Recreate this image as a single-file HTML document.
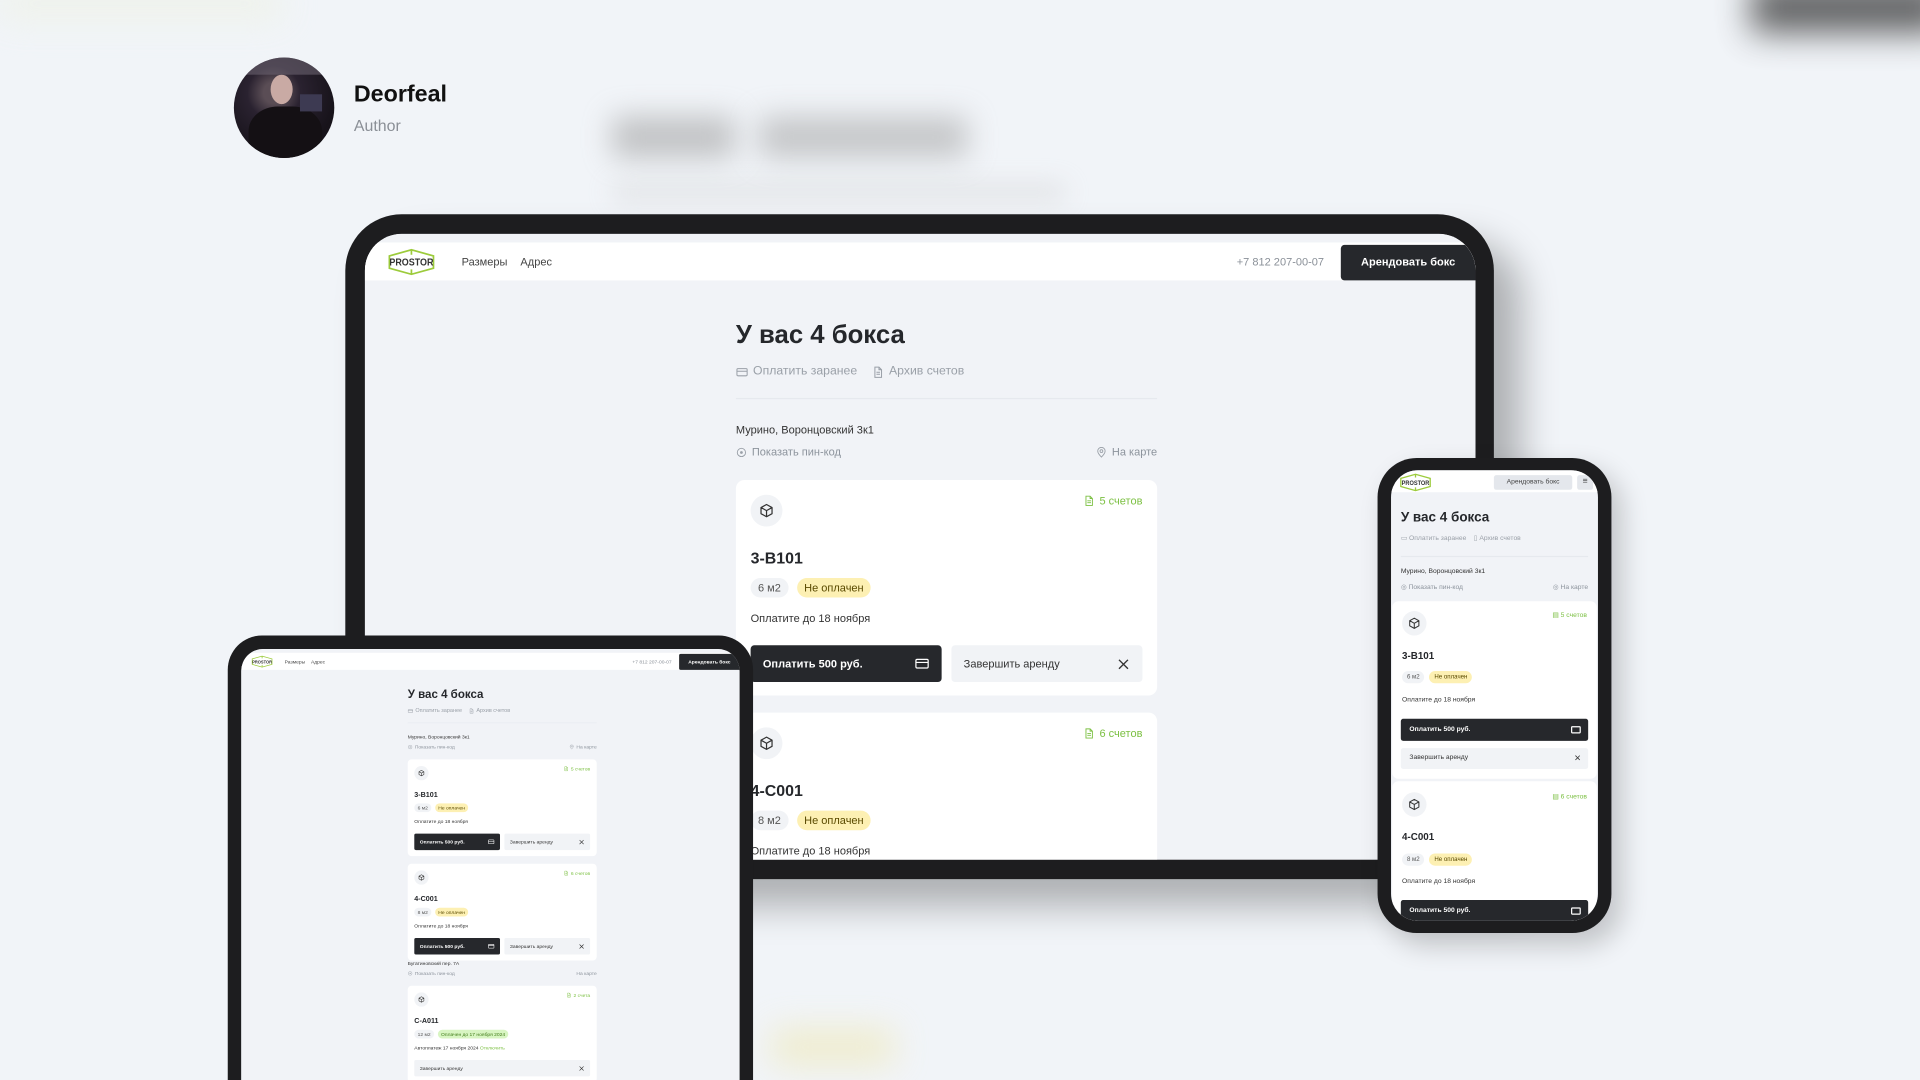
<!DOCTYPE html>
<html><head><meta charset="utf-8">
<style>
*{box-sizing:border-box;margin:0;padding:0}
html,body{width:1920px;height:1080px;overflow:hidden;background:#f1f4f8;font-family:"Liberation Sans","DejaVu Sans",sans-serif;color:#222}
#w{position:absolute;left:0;top:0;width:1568px;height:882px;transform:scale(1.2244898);transform-origin:0 0;overflow:hidden;background:#f1f4f8}
.a{position:absolute}
.blur{position:absolute;filter:blur(14px)}
.scr{position:absolute;left:0;top:0;width:907px;height:800px;background:#f1f3f7}
.nav{position:absolute;left:0;top:7px;width:907px;height:31px;background:#fff}
.nav .l{position:absolute;font-size:9px;color:#444;top:11px}
.btn-dark{position:absolute;left:797px;top:2px;width:110px;height:29px;background:#26282c;color:#fff;font-size:9px;font-weight:bold;text-align:center;line-height:29px;border-radius:3px 0 0 3px}
.col{position:absolute;left:303px;top:0;width:344px}
.h1{position:absolute;left:0;top:71px;font-size:21px;font-weight:bold;line-height:24px;color:#25272b;white-space:nowrap}
.lk{position:absolute;font-size:10px;color:#9aa0a8;white-space:nowrap;display:flex;align-items:center;gap:4px}
.dv{position:absolute;left:0;top:134px;width:344px;height:1px;background:#e6e9ee}
.ad{position:absolute;left:0;font-size:9px;color:#333;white-space:nowrap}
.pn{position:absolute;font-size:9px;color:#8c939c;white-space:nowrap;display:flex;align-items:center;gap:4px}
.card{position:absolute;left:0;width:344px;height:176px;background:#fff;border-radius:7px}
.ic{position:absolute;left:12px;top:12px;width:26px;height:26px;border-radius:50%;background:#f1f3f6;display:flex;align-items:center;justify-content:center}
.cnt{position:absolute;right:12px;top:12px;font-size:9px;color:#7cc043;display:flex;align-items:center;gap:4px;white-space:nowrap}
.nm{position:absolute;left:12px;top:56px;font-size:13px;font-weight:bold;line-height:16px;color:#25272b}
.chips{position:absolute;left:12px;top:80px;display:flex;gap:7px}
.chip{height:16px;line-height:16px;padding:0 6px;border-radius:8px;font-size:9px;background:#f1f3f6;color:#555;white-space:nowrap}
.chip.y{background:#fdf0b3;color:#5a4a00}
.chip.g{background:#d8f5c2;color:#3f7a17}
.tx{position:absolute;left:12px;top:107px;font-size:9px;line-height:12px;color:#333;white-space:nowrap}
.b1{position:absolute;left:12px;top:135px;width:156px;height:30px;background:#26282c;border-radius:3px;color:#fff;font-size:9px;font-weight:bold;line-height:30px;padding-left:10px}
.b2{position:absolute;left:176px;top:135px;width:156px;height:30px;background:#f1f3f6;border-radius:3px;color:#333;font-size:9px;line-height:30px;padding-left:10px}
.b1 svg,.b2 svg{position:absolute;right:10px;top:9px}
.frame{position:absolute;background:#1d1d1f}
.scrwrap{position:absolute;overflow:hidden;background:#f1f3f7}
</style></head><body><div id="w">

<div class="blur" style="left:0;top:-10px;width:230px;height:26px;background:#eef2e6;opacity:.8"></div>
<div class="blur" style="left:1430px;top:-15px;width:160px;height:42px;background:#333;opacity:.75"></div>
<div class="blur" style="left:500px;top:95px;width:100px;height:34px;background:#9a9a9a;opacity:.55;filter:blur(12px)"></div>
<div class="blur" style="left:620px;top:95px;width:170px;height:34px;background:#9a9a9a;opacity:.5;filter:blur(12px)"></div>
<div class="blur" style="left:500px;top:150px;width:370px;height:14px;background:#c8c8c8;opacity:.4;filter:blur(10px)"></div>
<div class="blur" style="left:630px;top:840px;width:100px;height:30px;background:#efe7b0;opacity:.6"></div>

<div class="a" style="left:191px;top:47px;width:82px;height:82px;border-radius:50%;overflow:hidden;background:radial-gradient(circle at 40% 35%,#5a4d55 0 12%,#2a2230 30%,#17131a 70%)">
  <div class="a" style="left:30px;top:14px;width:18px;height:24px;border-radius:50%;background:#c9aaa4"></div>
  <div class="a" style="left:12px;top:40px;width:60px;height:50px;border-radius:40%;background:#141014"></div>
  <div class="a" style="left:54px;top:30px;width:18px;height:14px;background:#3d3a52"></div>
  <div class="a" style="left:8px;top:0;width:66px;height:14px;background:#6b6370;opacity:.6"></div>
</div>
<div class="a" style="left:289px;top:67px;font-size:19px;font-weight:bold;color:#111">Deorfeal</div>
<div class="a" style="left:289px;top:95px;font-size:13px;color:#8a8f96">Author</div>

<div class="frame" style="left:282px;top:175px;width:938px;height:543px;border-radius:46px 46px 0 0;box-shadow:22px 22px 30px rgba(0,0,0,.28)"></div>
<div class="scrwrap" style="left:298px;top:191px;width:907px;height:511px;border-radius:30px 30px 0 0" id="lap"></div>

<div class="frame" style="left:186px;top:519px;width:429px;height:363px;border-radius:28px 28px 0 0"></div>
<div class="scrwrap" style="left:197px;top:530px;width:407px;height:352px;border-radius:18px 18px 0 0">
  <div style="position:absolute;left:0;top:0;width:907px;height:800px;transform:scale(.4487);transform-origin:0 0" id="tab"></div>
</div>

<div class="frame" style="left:1125px;top:374px;width:191px;height:388px;border-radius:32px;box-shadow:8px 10px 22px rgba(0,0,0,.2)"></div>
<div class="scrwrap" style="left:1136px;top:384px;width:169px;height:368px;border-radius:22px;background:#f1f3f7">
  <div class="a" style="left:0;top:0;width:169px;height:18px;background:#fff"></div>
  <svg class="a" style="left:3px;top:2px" width="34" height="16" viewBox="0 0 44 24"><path d="M4 7 L22 2 L40 7 L40 17 L22 22 L4 17 Z M22 2 V6 M22 18 V22" fill="none" stroke="#9ccb3b" stroke-width="1.6"/><text x="22" y="15" text-anchor="middle" font-size="8" font-weight="bold" fill="#333" font-family="Liberation Sans" textLength="34" lengthAdjust="spacingAndGlyphs">PROSTOR</text></svg>
  <div class="a" style="left:84px;top:4px;width:64px;height:12px;background:#e4e7ec;border-radius:2px;font-size:5.5px;color:#444;text-align:center;line-height:12px">Арендовать бокс</div>
  <div class="a" style="left:152px;top:4px;width:13px;height:12px;background:#e4e7ec;border-radius:2px;font-size:7px;text-align:center;line-height:12px;color:#444">≡</div>
  <div class="a" style="left:8px;top:33px;font-size:11px;font-weight:bold;color:#25272b;white-space:nowrap">У вас 4 бокса</div>
  <div class="a" style="left:8px;top:53px;font-size:5.5px;color:#9aa0a8;white-space:nowrap">▭ Оплатить заранее &nbsp;&nbsp; ▯ Архив счетов</div>
  <div class="a" style="left:8px;top:70px;width:153px;height:1px;background:#e6e9ee"></div>
  <div class="a" style="left:8px;top:80px;font-size:5.5px;color:#333;white-space:nowrap">Мурино, Воронцовский 3к1</div>
  <div class="a" style="left:8px;top:93px;font-size:5.5px;color:#8c939c;white-space:nowrap">◎ Показать пин-код</div>
  <div class="a" style="right:8px;top:93px;font-size:5.5px;color:#8c939c;white-space:nowrap">◎ На карте</div>

  <div class="a" style="left:1px;top:107px;width:167px;height:145px;background:#fff;border-radius:5px">
    <div class="a" style="left:8px;top:8px;width:20px;height:20px;border-radius:50%;background:#f1f3f6;display:flex;align-items:center;justify-content:center"><svg width="10" height="10" viewBox="0 0 24 24"><path d="M12 2L21 7V17L12 22L3 17V7Z M3 7L12 12L21 7 M12 12V22" fill="none" stroke="#333" stroke-width="2" stroke-linejoin="round"/></svg></div>
    <div class="a" style="right:8px;top:9px;font-size:5.5px;color:#7cc043;white-space:nowrap">▤ 5 счетов</div>
    <div class="a" style="left:8px;top:40px;font-size:8px;font-weight:bold;color:#25272b">3-B101</div>
    <div class="a" style="left:8px;top:57px;display:flex;gap:4px"><span style="height:10px;line-height:10px;padding:0 4px;border-radius:5px;background:#f1f3f6;font-size:5px;color:#555">6 м2</span><span style="height:10px;line-height:10px;padding:0 4px;border-radius:5px;background:#fdf0b3;font-size:5px;color:#5a4a00">Не оплачен</span></div>
    <div class="a" style="left:8px;top:78px;font-size:5.5px;color:#333;white-space:nowrap">Оплатите до 18 ноября</div>
    <div class="a" style="left:7px;top:96px;width:153px;height:18px;background:#26282c;border-radius:2px;color:#fff;font-size:5.5px;font-weight:bold;line-height:18px;padding-left:7px">Оплатить 500 руб.<span style="position:absolute;right:6px;top:6px;width:8px;height:6px;border:1px solid #fff;border-radius:1px"></span></div>
    <div class="a" style="left:7px;top:120px;width:153px;height:17px;background:#f1f3f6;border-radius:2px;color:#333;font-size:5.5px;line-height:17px;padding-left:7px">Завершить аренду<span style="position:absolute;right:6px;top:0;font-size:9px">×</span></div>
  </div>
  <div class="a" style="left:1px;top:254px;width:167px;height:145px;background:#fff;border-radius:5px">
    <div class="a" style="left:8px;top:9px;width:20px;height:20px;border-radius:50%;background:#f1f3f6;display:flex;align-items:center;justify-content:center"><svg width="10" height="10" viewBox="0 0 24 24"><path d="M12 2L21 7V17L12 22L3 17V7Z M3 7L12 12L21 7 M12 12V22" fill="none" stroke="#333" stroke-width="2" stroke-linejoin="round"/></svg></div>
    <div class="a" style="right:8px;top:10px;font-size:5.5px;color:#7cc043;white-space:nowrap">▤ 6 счетов</div>
    <div class="a" style="left:8px;top:41px;font-size:8px;font-weight:bold;color:#25272b">4-C001</div>
    <div class="a" style="left:8px;top:59px;display:flex;gap:4px"><span style="height:10px;line-height:10px;padding:0 4px;border-radius:5px;background:#f1f3f6;font-size:5px;color:#555">8 м2</span><span style="height:10px;line-height:10px;padding:0 4px;border-radius:5px;background:#fdf0b3;font-size:5px;color:#5a4a00">Не оплачен</span></div>
    <div class="a" style="left:8px;top:79px;font-size:5.5px;color:#333;white-space:nowrap">Оплатите до 18 ноября</div>
    <div class="a" style="left:7px;top:97px;width:153px;height:18px;background:#26282c;border-radius:2px;color:#fff;font-size:5.5px;font-weight:bold;line-height:18px;padding-left:7px">Оплатить 500 руб.<span style="position:absolute;right:6px;top:6px;width:8px;height:6px;border:1px solid #fff;border-radius:1px"></span></div>
  </div>
</div>

<template id="tpl">
<div class="scr">
  <div class="nav">
    <svg class="a" style="left:16px;top:4px" width="44" height="24" viewBox="0 0 44 24"><path d="M4 7 L22 2 L40 7 L40 17 L22 22 L4 17 Z M22 2 V6 M22 18 V22" fill="none" stroke="#9ccb3b" stroke-width="1.4"/><text x="22" y="15" text-anchor="middle" font-size="8" font-weight="bold" fill="#333" font-family="Liberation Sans" textLength="36" lengthAdjust="spacingAndGlyphs">PROSTOR</text></svg>
    <div class="l" style="left:79px">Размеры</div>
    <div class="l" style="left:127px">Адрес</div>
    <div class="l" style="left:712px;color:#8a9098">+7 812 207-00-07</div>
    <div class="btn-dark">Арендовать бокс</div>
  </div>
  <div class="col">
    <div class="h1">У вас 4 бокса</div>
    <div class="lk" style="left:0;top:107px"><svg width="10" height="10" viewBox="0 0 24 24"><rect x="2" y="5" width="20" height="14" rx="2" fill="none" stroke="#9aa0a8" stroke-width="2"/><path d="M2 10H22" stroke="#9aa0a8" stroke-width="2"/></svg>Оплатить заранее</div>
    <div class="lk" style="left:111px;top:107px"><svg width="10" height="10" viewBox="0 0 24 24"><path d="M6 2H14L19 7V22H6Z M14 2V7H19 M9 12H16 M9 16H16" fill="none" stroke="#9aa0a8" stroke-width="2"/></svg>Архив счетов</div>
    <div class="dv"></div>
    <div class="ad" style="top:155px">Мурино, Воронцовский 3к1</div>
    <div class="pn" style="left:0;top:173px"><svg width="9" height="9" viewBox="0 0 24 24"><circle cx="12" cy="12" r="9" fill="none" stroke="#9aa0a8" stroke-width="2"/><circle cx="12" cy="12" r="3" fill="#9aa0a8"/></svg>Показать пин-код</div>
    <div class="pn" style="right:0;top:173px"><svg width="9" height="9" viewBox="0 0 24 24"><path d="M12 22C12 22 4 14 4 9A8 8 0 0 1 20 9C20 14 12 22 12 22Z" fill="none" stroke="#9aa0a8" stroke-width="2"/><circle cx="12" cy="9" r="3" fill="none" stroke="#9aa0a8" stroke-width="2"/></svg>На карте</div>

    <div class="card" style="top:201px">
      <div class="ic"><svg width="12" height="12" viewBox="0 0 24 24"><path d="M12 2L21 7V17L12 22L3 17V7Z M3 7L12 12L21 7 M12 12V22" fill="none" stroke="#333" stroke-width="2" stroke-linejoin="round"/></svg></div>
      <div class="cnt"><svg width="9" height="10" viewBox="0 0 24 24"><path d="M5 2H14L19 7V22H5Z M14 2V7H19 M8 12H16 M8 16H16" fill="none" stroke="#7cc043" stroke-width="2"/></svg>5 счетов</div>
      <div class="nm">3-B101</div>
      <div class="chips"><span class="chip">6 м2</span><span class="chip y">Не оплачен</span></div>
      <div class="tx">Оплатите до 18 ноября</div>
      <div class="b1">Оплатить 500 руб.<svg width="12" height="12" viewBox="0 0 24 24"><rect x="2" y="5" width="20" height="14" rx="2" fill="none" stroke="#fff" stroke-width="2"/><path d="M2 10H22" stroke="#fff" stroke-width="2"/></svg></div>
      <div class="b2">Завершить аренду<svg width="11" height="11" viewBox="0 0 24 24" style="top:10px"><path d="M4 4L20 20M20 4L4 20" stroke="#333" stroke-width="2.4"/></svg></div>
    </div>
    <div class="card" style="top:391px">
      <div class="ic"><svg width="12" height="12" viewBox="0 0 24 24"><path d="M12 2L21 7V17L12 22L3 17V7Z M3 7L12 12L21 7 M12 12V22" fill="none" stroke="#333" stroke-width="2" stroke-linejoin="round"/></svg></div>
      <div class="cnt"><svg width="9" height="10" viewBox="0 0 24 24"><path d="M5 2H14L19 7V22H5Z M14 2V7H19 M8 12H16 M8 16H16" fill="none" stroke="#7cc043" stroke-width="2"/></svg>6 счетов</div>
      <div class="nm">4-C001</div>
      <div class="chips"><span class="chip">8 м2</span><span class="chip y">Не оплачен</span></div>
      <div class="tx">Оплатите до 18 ноября</div>
      <div class="b1">Оплатить 500 руб.<svg width="12" height="12" viewBox="0 0 24 24"><rect x="2" y="5" width="20" height="14" rx="2" fill="none" stroke="#fff" stroke-width="2"/><path d="M2 10H22" stroke="#fff" stroke-width="2"/></svg></div>
      <div class="b2">Завершить аренду<svg width="11" height="11" viewBox="0 0 24 24" style="top:10px"><path d="M4 4L20 20M20 4L4 20" stroke="#333" stroke-width="2.4"/></svg></div>
    </div>
    <div class="ad" style="top:567px">Бугатиновский пер. 7А</div>
    <div class="pn" style="left:0;top:585px"><svg width="9" height="9" viewBox="0 0 24 24"><circle cx="12" cy="12" r="9" fill="none" stroke="#9aa0a8" stroke-width="2"/><circle cx="12" cy="12" r="3" fill="#9aa0a8"/></svg>Показать пин-код</div>
    <div class="pn" style="right:0;top:585px">На карте</div>
    <div class="card" style="top:613px">
      <div class="ic"><svg width="12" height="12" viewBox="0 0 24 24"><path d="M12 2L21 7V17L12 22L3 17V7Z M3 7L12 12L21 7 M12 12V22" fill="none" stroke="#333" stroke-width="2" stroke-linejoin="round"/></svg></div>
      <div class="cnt"><svg width="9" height="10" viewBox="0 0 24 24"><path d="M5 2H14L19 7V22H5Z M14 2V7H19 M8 12H16 M8 16H16" fill="none" stroke="#7cc043" stroke-width="2"/></svg>2 счета</div>
      <div class="nm">C-A011</div>
      <div class="chips"><span class="chip">12 м2</span><span class="chip g">Оплачен до 17 ноября 2024</span></div>
      <div class="tx">Автоплатеж 17 ноября 2024 <span style="color:#7cc043">Отключить</span></div>
      <div class="b2" style="left:12px;width:320px">Завершить аренду<svg width="11" height="11" viewBox="0 0 24 24" style="top:10px"><path d="M4 4L20 20M20 4L4 20" stroke="#333" stroke-width="2.4"/></svg></div>
    </div>
  </div>
</div>
</template>
<script>
var t=document.getElementById('tpl').innerHTML;
document.getElementById('lap').innerHTML=t;
document.getElementById('tab').innerHTML=t;
</script>
</div></body></html>
